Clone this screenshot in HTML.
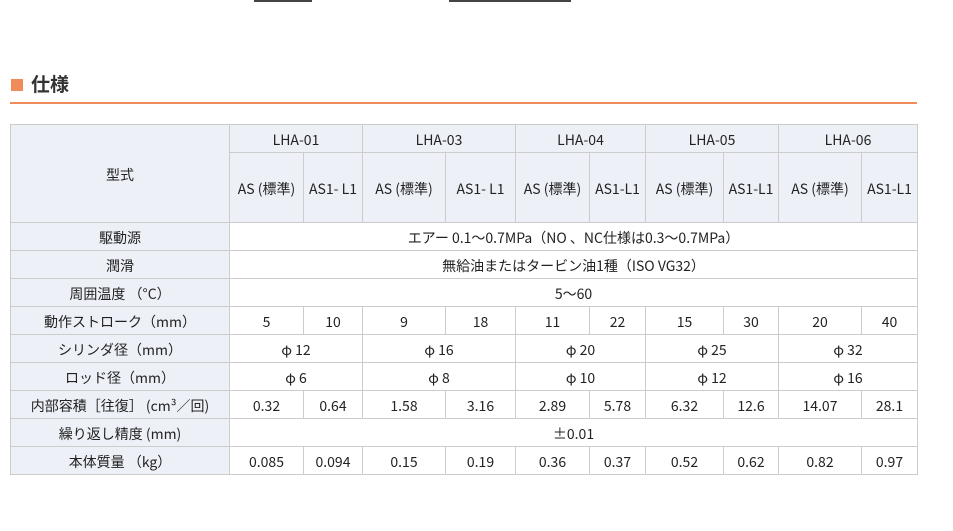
<!DOCTYPE html>
<html><head><meta charset="utf-8"><style>
body{margin:0;background:#fff;width:953px;height:531px;position:relative;overflow:hidden;font-family:"Noto Sans CJK JP","Liberation Sans",sans-serif;color:#222}
.tl{position:absolute;top:0;height:2px;background:#444}
.sq{position:absolute;left:11px;top:79px;width:12px;height:12px;background:#f08c5a}
h2{position:absolute;left:31px;top:70px;margin:0;font-size:19px;font-weight:bold;color:#333;line-height:28px}
.ul{position:absolute;left:10px;top:102px;width:907px;height:2px;background:#f08c5a}
table{position:absolute;left:10px;top:124px;width:907px;border-collapse:collapse;table-layout:fixed;font-size:14px}
td{border:1px solid #ccc;text-align:center;padding:2px 0 0;height:25px;line-height:20px;white-space:nowrap;overflow:hidden}
td.h{background:#edf1f7}
</style></head><body>
<div class="tl" style="left:254px;width:58px"></div>
<div class="tl" style="left:449px;width:122px"></div>
<div class="sq"></div><h2>仕様</h2><div class="ul"></div>
<table>
<colgroup><col style="width:219px"><col style="width:74px"><col style="width:59px"><col style="width:83px"><col style="width:70px"><col style="width:74px"><col style="width:56px"><col style="width:78px"><col style="width:55px"><col style="width:83px"><col style="width:56px"></colgroup>
<tr><td class="h" rowspan="2">型式</td><td class="h" colspan="2">LHA-01</td><td class="h" colspan="2">LHA-03</td><td class="h" colspan="2">LHA-04</td><td class="h" colspan="2">LHA-05</td><td class="h" colspan="2">LHA-06</td></tr>
<tr><td class="h" style="height:67px">AS (標準)</td><td class="h">AS1- L1</td><td class="h">AS (標準)</td><td class="h">AS1- L1</td><td class="h">AS (標準)</td><td class="h">AS1-L1</td><td class="h">AS (標準)</td><td class="h">AS1-L1</td><td class="h">AS (標準)</td><td class="h">AS1-L1</td></tr>
<tr><td class="h">駆動源</td><td colspan="10">エアー 0.1～0.7MPa（NO 、NC仕様は0.3～0.7MPa）</td></tr>
<tr><td class="h">潤滑</td><td colspan="10">無給油またはタービン油1種（ISO VG32）</td></tr>
<tr><td class="h">周囲温度 （°C）</td><td colspan="10">5～60</td></tr>
<tr><td class="h">動作ストローク（mm）</td><td>5</td><td>10</td><td>9</td><td>18</td><td>11</td><td>22</td><td>15</td><td>30</td><td>20</td><td>40</td></tr>
<tr><td class="h">シリンダ径（mm）</td><td colspan="2">φ 12</td><td colspan="2">φ 16</td><td colspan="2">φ 20</td><td colspan="2">φ 25</td><td colspan="2">φ 32</td></tr>
<tr><td class="h">ロッド径（mm）</td><td colspan="2">φ 6</td><td colspan="2">φ 8</td><td colspan="2">φ 10</td><td colspan="2">φ 12</td><td colspan="2">φ 16</td></tr>
<tr><td class="h">内部容積［往復］ (cm³／回)</td><td>0.32</td><td>0.64</td><td>1.58</td><td>3.16</td><td>2.89</td><td>5.78</td><td>6.32</td><td>12.6</td><td>14.07</td><td>28.1</td></tr>
<tr><td class="h">繰り返し精度 (mm)</td><td colspan="10">±0.01</td></tr>
<tr><td class="h">本体質量 （kg）</td><td>0.085</td><td>0.094</td><td>0.15</td><td>0.19</td><td>0.36</td><td>0.37</td><td>0.52</td><td>0.62</td><td>0.82</td><td>0.97</td></tr>
</table>
</body></html>
